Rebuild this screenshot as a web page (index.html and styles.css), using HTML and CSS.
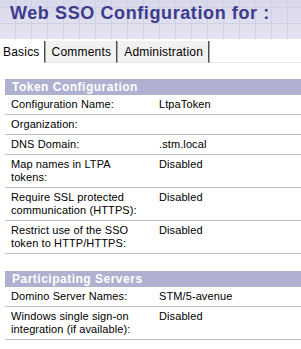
FILE: index.html
```html
<html>
<head>
    <title>Web SSO Configuration</title>
    <link rel="stylesheet" href="styles.css">
</head>
<body>
    <div class="banner">
        <h1>Web SSO Configuration for :</h1>
    </div>

    <div class="tabs">
        <div class="tab selected tab-first">Basics</div>
        <div class="tab">Comments</div>
        <div class="tab">Administration</div>
        <div class="tab-rest"></div>
    </div>

    <div class="section">
        <div class="section-title">Token Configuration</div>
        <div class="row"><div class="label">Configuration Name:</div><div class="value">LtpaToken</div></div>
        <div class="row"><div class="label">Organization:</div><div class="value"></div></div>
        <div class="row"><div class="label">DNS Domain:</div><div class="value">.stm.local</div></div>
        <div class="row"><div class="label">Map names in LTPA tokens:</div><div class="value">Disabled</div></div>
        <div class="row"><div class="label">Require SSL protected communication (HTTPS):</div><div class="value">Disabled</div></div>
        <div class="row"><div class="label">Restrict use of the SSO token to HTTP/HTTPS:</div><div class="value">Disabled</div></div>
    </div>

    <div class="section section-second">
        <div class="section-title">Participating Servers</div>
        <div class="row"><div class="label">Domino Server Names:</div><div class="value">STM/5-avenue</div></div>
        <div class="row"><div class="label">Windows single sign-on integration (if available):</div><div class="value">Disabled</div></div>
    </div>
</body>
</html>
```

FILE: styles.css
```css
body{
    margin: 0;
    font-family: "Liberation Sans", Arial, sans-serif;
    font-size: 11px;
    color: #000;
    background-color: #fff;
}
.banner{
    height: 39px;
    background-color: #dcdcec;
    background-image:
        repeating-linear-gradient(90deg, transparent 0 15px, #d0d0e4 15px 16px),
        repeating-linear-gradient(0deg, transparent 0 15px, #d0d0e4 15px 16px),
        linear-gradient(#d8d8ea, #e4e4f1);
}
h1{
    margin: 0;
    padding: 2px 0 0 10px;
    font-size: 18px;
    line-height: 22px;
    letter-spacing: 0.6px;
    color: #3b3b8e;
}
.tabs{
    display: flex;
    margin-top: 2px;
    height: 22px;
}
.tab{
    font-size: 12px;
    line-height: 22px;
    padding: 0 5px 0 6px;
    letter-spacing: 0.2px;
    background-color: #f1f1f1;
    border-right: 1px solid #4c4c4c;
    box-shadow: 1px 0 0 #a8a8a8;
    margin-right: 1px;
    border-bottom: 1px solid #e6e6e6;
}
.tab-first{
    padding-left: 3px;
    padding-right: 4px;
}
.selected{
    background-color: #fff;
    border-bottom-color: #fff;
}
.tab-rest{
    flex: 1;
    border-bottom: 1px solid #e6e6e6;
}
.section{
    margin: 16px 0 0 5px;
}
.section-second{
    margin-top: 17px;
}
.section-title{
    height: 16px;
    line-height: 16px;
    padding-left: 7px;
    background-color: #b0b0d0;
    color: #fff;
    font-weight: bold;
    font-size: 12px;
    letter-spacing: 0.5px;
}
.row{
    display: grid;
    grid-template-columns: 154px 1fr;
    border-bottom: 1px solid #c0c0c0;
    padding: 3px 0;
    line-height: 13px;
    letter-spacing: 0.1px;
}
.label{
    padding: 0 18px 0 6px;
}
```
